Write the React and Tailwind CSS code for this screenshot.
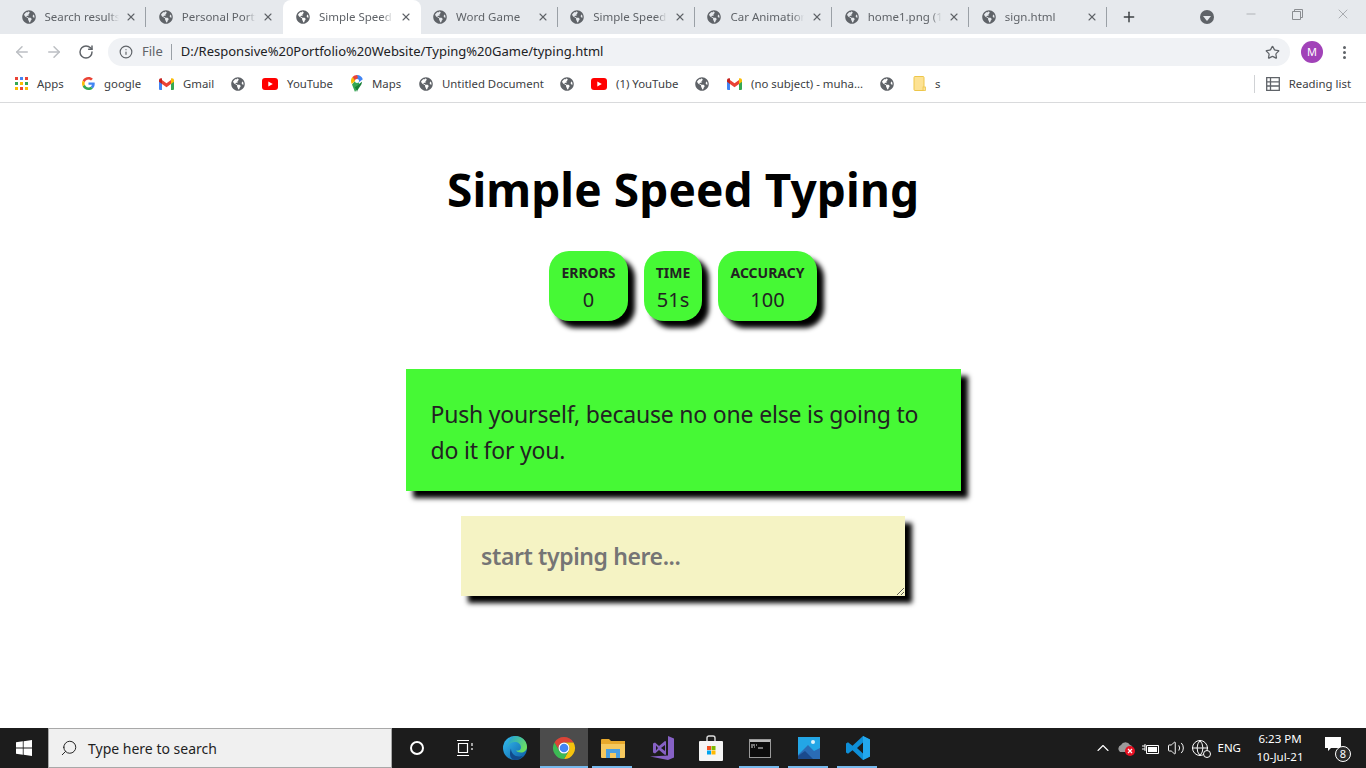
import React from "react";
import { FaGlobeAmericas } from "react-icons/fa";
import { ArrowLeft, ArrowRight, RotateCw, Info, Star, X, Plus, ChevronUp, Search, Volume2, Globe, Minus } from "lucide-react";

const tabs = [
  { title: "Search results" },
  { title: "Personal Portfolio" },
  { title: "Simple Speed Typing", active: true },
  { title: "Word Game" },
  { title: "Simple Speed Typing" },
  { title: "Car Animation" },
  { title: "home1.png (1366" },
  { title: "sign.html" },
];

function Globe16({ size = 14 }) {
  return <FaGlobeAmericas size={size} className="text-[#5f6368] shrink-0" />;
}

function GoogleIcon() {
  return (
    <svg width="13" height="13" viewBox="0 0 48 48" className="shrink-0">
      <path fill="#EA4335" d="M24 9.5c3.5 0 6.700 1.200 9.200 3.600l6.900-6.900C35.900 2.400 30.500 0 24 0 14.600 0 6.500 5.400 2.600 13.200l8 6.200C12.500 13.700 17.800 9.500 24 9.500z" />
      <path fill="#4285F4" d="M46.900 24.500c0-1.600-.1-3.100-.4-4.500H24v9h12.900c-.6 3-2.200 5.500-4.700 7.200l7.700 6c4.500-4.200 7-10.300 7-17.700z" />
      <path fill="#FBBC05" d="M10.500 28.600c-.5-1.400-.8-3-.8-4.600s.3-3.200.8-4.600l-8-6.200C.9 16.500 0 20.100 0 24s.9 7.500 2.600 10.800l7.900-6.200z" />
      <path fill="#34A853" d="M24 48c6.500 0 11.900-2.100 15.900-5.800l-7.700-6c-2.200 1.500-4.900 2.300-8.200 2.300-6.200 0-11.500-4.200-13.400-9.900l-8 6.200C6.500 42.600 14.600 48 24 48z" />
    </svg>
  );
}

function GmailIcon() {
  return (
    <svg width="15" height="12" viewBox="0 0 15 12" className="shrink-0">
      <path fill="#4285F4" d="M0 2h3v10H1a1 1 0 0 1-1-1z" />
      <path fill="#34A853" d="M12 2h3v9a1 1 0 0 1-1 1h-2z" />
      <path fill="#EA4335" d="M3 2v4l4.500 3.300L12 6V2L7.500 5.300z" />
      <path fill="#C5221F" d="M0 2.200C0 .6 1.800-.4 3 .6V6L0 3.800z" />
      <path fill="#FBBC05" d="M15 2.200c0-1.600-1.800-2.600-3-1.600V6l3-2.200z" />
    </svg>
  );
}

function YoutubeIcon() {
  return (
    <svg width="16" height="12" viewBox="0 0 16 12" className="shrink-0">
      <rect width="16" height="12" rx="3" fill="#FF0000" />
      <path d="M6.300 3.400v5.200L10.800 6z" fill="#fff" />
    </svg>
  );
}

function MapsIcon() {
  return (
    <svg width="12" height="17" viewBox="0 0 12 17" className="shrink-0">
      <path fill="#34A853" d="M1 9.500 6.500 3l2 7L4 17z" />
      <path fill="#FBBC05" d="M.8 9C.2 8 0 7 0 6c0-1.500.5-2.800 1.500-3.900L5 5z" />
      <path fill="#4285F4" d="M6 0c2.800 0 5 1.700 5.800 4.200L7 8 4.500 3z" />
      <path fill="#EA4335" d="M1.500 2.100C2.600.8 4.200 0 6 0l1 2.800L4 5.500z" />
      <circle cx="6" cy="6" r="2.100" fill="#fff" />
      <path fill="#188038" d="M6 17c-.4-2-1.200-3.400-2.200-4.800L7 10.200c1-1 2-2.200 4-3.500C11 10.500 7 13 6 17z" />
    </svg>
  );
}

function AppsIcon() {
  const colours = ["#EA4335", "#4285F4", "#EA4335", "#34A853", "#FBBC05", "#34A853", "#FBBC05", "#EA4335", "#FBBC05"];
  return (
    <div className="grid grid-cols-3 gap-[2px] w-[13px] h-[13px] shrink-0">
      {colours.map((c, i) => (
        <span key={i} className="w-[3px] h-[3px]" style={{ background: c }} />
      ))}
    </div>
  );
}

function FolderIcon() {
  return (
    <svg width="13" height="15" viewBox="0 0 13 15" className="shrink-0">
      <path d="M1 1.500a1 1 0 0 1 1-1h8a1 1 0 0 1 1 1V14.500H2a1 1 0 0 1-1-1z" fill="#FDE293" stroke="#EDC64A" />
      <rect x="10" y="11" width="2.500" height="3.500" fill="#FDE293" stroke="#EDC64A" strokeWidth="0.800" />
    </svg>
  );
}

function Bookmark({ icon, label, w, className = "" }) {
  return (
    <div className={`flex items-center shrink-0 ${className}`}>
      {icon}
      {label && (
        <span className="ml-[9px] whitespace-nowrap text-[11.400px] text-[#3c4043]" style={{ width: w }}>
          {label}
        </span>
      )}
    </div>
  );
}

function ChromeIcon() {
  return (
    <svg width="24" height="24" viewBox="0 0 24 24">
      <path fill="#DB4437" d="M2.470 6.500A11 11 0 0 1 21.530 6.500H12A5.500 5.500 0 0 0 7.240 14.750z" />
      <path fill="#F4C20D" d="M21.530 6.500A11 11 0 0 1 12 23L16.760 14.750A5.500 5.500 0 0 0 12 6.500z" />
      <path fill="#3CBA54" d="M12 23A11 11 0 0 1 2.470 6.500L7.240 14.750A5.500 5.500 0 0 0 16.760 14.750z" />
      <circle cx="12" cy="12" r="5.500" fill="#fff" />
      <circle cx="12" cy="12" r="4.300" fill="#4285F4" />
    </svg>
  );
}

function TaskCell({ children, active, underline }) {
  return (
    <div className={`relative h-full flex items-center justify-center shrink-0 ${active ? "w-[48px] ml-px bg-[#4c4c4c]" : "w-[49px]"}`}>
      {children}
      {underline && <span className={`absolute bottom-0 h-[2px] bg-[#76b9ed] ${active ? "left-0 right-0" : "left-[4px] right-[5px]"}`} />}
    </div>
  );
}

export default function App() {
  return (
    <div className="w-[1366px] h-[768px] flex flex-col overflow-hidden bg-white font-['Noto_Sans',sans-serif]">
      {/* TAB STRIP */}
      <div className="h-[34px] bg-[#e6e9ed] flex pl-[9px] shrink-0">
        {tabs.map((t, i) => (
          <div
            key={i}
            className={`relative w-[137.200px] h-full flex items-center pl-[12.500px] pr-[9px] shrink-0 ${t.active ? "bg-white rounded-t-[8px]" : ""}`}
          >
            <Globe16 />
            <span className="ml-[9px] w-[74px] overflow-hidden whitespace-nowrap text-[11.500px] text-[#5f6368] [mask-image:linear-gradient(to_right,black_85%,transparent)]">
              {t.title}
            </span>
            <X size={12} strokeWidth={2.200} className="ml-auto text-[#5f6368]" />
            {!t.active && i !== 1 && <span className="absolute right-0 top-[7px] h-[20px] w-px bg-[#9aa0a6]" />}
          </div>
        ))}
        <Plus size={16} strokeWidth={2.200} className="ml-[14px] mt-[9px] text-[#3c4043]" />
        <div className="ml-[63px] mt-[10px] w-[14px] h-[14px] rounded-full bg-[#5f6368] flex items-center justify-center shrink-0">
          <span className="mt-[2px] border-x-[4px] border-x-transparent border-t-[5px] border-t-[#e6e9ed]" />
        </div>
        <Minus size={14} strokeWidth={1} className="ml-[30px] mt-[7px] text-[#8a8d91]" />
        <svg width="11" height="11" viewBox="0 0 11 11" className="ml-[34px] mt-[9px] text-[#8a8d91]" fill="none" stroke="currentColor">
          <path d="M.5 2.500h8v8h-8zM2.500 2.500v-2h8v8h-2" />
        </svg>
        <X size={16} strokeWidth={1} className="ml-[32px] mt-[6px] text-[#8a8d91]" />
      </div>

      {/* TOOLBAR */}
      <div className="h-[32px] pt-[4px] flex items-start bg-white shrink-0">
        <ArrowLeft size={18} strokeWidth={2} className="ml-[13px] mt-[5px] text-[#bcbfc3]" />
        <ArrowRight size={18} strokeWidth={2} className="ml-[14px] mt-[5px] text-[#bcbfc3]" />
        <RotateCw size={16} strokeWidth={2.200} className="ml-[15px] mt-[6px] text-[#5f6368]" />
        <div className="ml-[14px] w-[1182px] h-[28px] bg-[#f0f2f5] rounded-full flex items-center pl-[11px] pr-[10px]">
          <Info size={14} strokeWidth={2} className="text-[#5f6368]" />
          <span className="ml-[9px] text-[13px] text-[#5f6368]">File</span>
          <span className="ml-[8px] w-px h-[16px] bg-[#9aa0a6]" />
          <span className="ml-[9px] text-[13px] text-[#202124] whitespace-nowrap">D:/Responsive%20Portfolio%20Website/Typing%20Game/typing.html</span>
          <Star size={15} strokeWidth={2} className="ml-auto text-[#5f6368]" />
        </div>
        <div className="ml-[11px] mt-[3px] w-[22px] h-[22px] rounded-full bg-[#a142b8] flex items-center justify-center text-white text-[11px]">M</div>
        <div className="ml-[20px] mt-[8px] flex flex-col gap-[2px]">
          <span className="w-[3px] h-[3px] rounded-full bg-[#5f6368]" />
          <span className="w-[3px] h-[3px] rounded-full bg-[#5f6368]" />
          <span className="w-[3px] h-[3px] rounded-full bg-[#5f6368]" />
        </div>
      </div>

      {/* BOOKMARKS */}
      <div className="h-[37px] border-b border-[#d9dadc] flex items-center pl-[15px] bg-white shrink-0">
        <Bookmark icon={<AppsIcon />} label="Apps" w={27} />
        <Bookmark icon={<GoogleIcon />} label="google" w={38} className="ml-[18px]" />
        <Bookmark icon={<GmailIcon />} label="Gmail" w={31} className="ml-[17px]" />
        <Bookmark icon={<Globe16 />} className="ml-[17px]" />
        <Bookmark icon={<YoutubeIcon />} label="YouTube" w={46} className="ml-[17px]" />
        <Bookmark icon={<MapsIcon />} label="Maps" w={30} className="ml-[18px]" />
        <Bookmark icon={<Globe16 />} label="Untitled Document" w={101} className="ml-[17px]" />
        <Bookmark icon={<Globe16 />} className="ml-[17px]" />
        <Bookmark icon={<YoutubeIcon />} label="(1) YouTube" w={63} className="ml-[17px]" />
        <Bookmark icon={<Globe16 />} className="ml-[16px]" />
        <Bookmark icon={<GmailIcon />} label="(no subject) - muha..." w={112} className="ml-[18px]" />
        <Bookmark icon={<Globe16 />} className="ml-[17px]" />
        <Bookmark icon={<FolderIcon />} label="s" w={6} className="ml-[19px]" />
        <span className="ml-auto w-px h-[18px] bg-[#d0d2d5]" />
        <svg width="14" height="14" viewBox="0 0 14 14" className="ml-[11px] text-[#5f6368]" fill="none" stroke="currentColor" strokeWidth="1.300">
          <path d="M.7.7h12.600v12.600H.7zM.7 4.800h12.600M.7 9h12.600M4.500.7v12.600" />
        </svg>
        <span className="ml-[9px] mr-[15px] text-[11.400px] text-[#3c4043] whitespace-nowrap">Reading list</span>
      </div>

      {/* GAME */}
      <main className="flex-1 flex flex-col items-center bg-white">
        <h1 className="mt-[53px] h-[66px] leading-[66px] text-[46px] tracking-[0.100px] font-bold text-black">Simple Speed Typing</h1>
        <div className="mt-[29px] flex gap-[16px]">
          <div className="h-[70px] w-[79px] rounded-[20px] bg-[#46f935] shadow-[7px_7px_5px_#000] flex flex-col items-center pt-[11px]">
            <span className="text-[14px] leading-[22px] font-bold text-[#222]">ERRORS</span>
            <span className="text-[20px] leading-[32px] text-[#222]">0</span>
          </div>
          <div className="h-[70px] w-[58px] rounded-[20px] bg-[#46f935] shadow-[7px_7px_5px_#000] flex flex-col items-center pt-[11px]">
            <span className="text-[14px] leading-[22px] font-bold text-[#222]">TIME</span>
            <span className="text-[20px] leading-[32px] text-[#222]">51s</span>
          </div>
          <div className="h-[70px] w-[99px] rounded-[20px] bg-[#46f935] shadow-[7px_7px_5px_#000] flex flex-col items-center pt-[11px]">
            <span className="text-[14px] leading-[22px] font-bold text-[#222]">ACCURACY</span>
            <span className="text-[20px] leading-[32px] text-[#222]">100</span>
          </div>
        </div>
        <div className="mt-[48px] w-[555px] h-[122px] bg-[#46f935] shadow-[7px_7px_5px_#000] px-[25px] py-[27px] text-[23px] tracking-[-0.200px] leading-[36px] text-[#222]">
          Push yourself, because no one else is going to do it for you.
        </div>
        <textarea
          placeholder="start typing here..."
          className="mt-[25px] w-[444px] h-[80px] bg-[#f5f3c4] shadow-[7px_7px_5px_#000] px-[20px] py-[20px] text-[23px] tracking-[-0.400px] leading-[40px] font-semibold text-[#222] outline-none resize-y placeholder:text-[#757575] font-['Noto_Sans',sans-serif]"
        />
      </main>

      {/* TASKBAR */}
      <div className="h-[40px] bg-[#1c1c1c] flex items-stretch shrink-0 text-white">
        <div className="w-[48px] flex items-center justify-center">
          <svg width="16" height="16" viewBox="0 0 16 16" fill="#fff">
            <path d="M0 2.300 6.800 1.300V7.500H0zM7.600 1.200 16 0V7.500H7.600zM0 8.400H6.800V14.700L0 13.700zM7.600 8.400H16V16L7.600 14.800z" />
          </svg>
        </div>
        <div className="w-[344px] bg-[#f0f0f0] border border-[#a8a8a8] flex items-center pl-[11px]">
          <Search size={18} strokeWidth={1.300} className="text-[#222] -scale-x-100" />
          <span className="ml-[10px] text-[14px] text-[#1f1f1f]">Type here to search</span>
        </div>
        <TaskCell>
          <span className="w-[14px] h-[14px] rounded-full border-2 border-white" />
        </TaskCell>
        <TaskCell>
          <svg width="17" height="16" viewBox="0 0 17 16" fill="none" stroke="#fff">
            <path d="M0 .5h12M1.500 3.500h9v9h-9zM0 15.500h12M15 3v3M15 8v2" strokeWidth="1.200" />
          </svg>
        </TaskCell>
        <TaskCell>
          <svg width="24" height="24" viewBox="0 0 24 24">
            <defs>
              <linearGradient id="edgeA" x1="0" y1="0" x2="1" y2="1">
                <stop offset="0" stopColor="#35c1f1" />
                <stop offset="1" stopColor="#0c59a4" />
              </linearGradient>
              <linearGradient id="edgeB" x1="0" y1="0" x2="1" y2="0.600">
                <stop offset="0" stopColor="#1b9de2" />
                <stop offset="1" stopColor="#6ce05f" />
              </linearGradient>
            </defs>
            <circle cx="12" cy="12" r="12" fill="url(#edgeA)" />
            <path d="M12 0c6.500 0 12 4.500 12 11 0 3.500-3 5.500-6 5.500-2.500 0-4.500-.7-5-2 2 .3 5-.2 5-3 0-3.500-3-5.500-6-5.500-4 0-6.500 2.500-7.500 5C5.500 5 8 0 12 0z" fill="url(#edgeB)" />
            <path d="M8 12.500c0 4.500 3.500 8 8 8 1.500 0 3-.4 4-1-2 3-5 4.500-8 4.500-2 0-5-2-5-6 0-2.500.3-4 1-5.500z" fill="#114a8b" />
          </svg>
        </TaskCell>
        <TaskCell active underline>
          <ChromeIcon />
        </TaskCell>
        <TaskCell underline>
          <svg width="24" height="20" viewBox="0 0 24 20">
            <path d="M0 2a1 1 0 0 1 1-1h7l2 2h-10z" fill="#e8a92c" />
            <rect y="3" width="24" height="17" rx="1" fill="#f6c95e" />
            <rect y="3" width="24" height="3" fill="#e8a92c" />
            <path d="M5 11h14v9h-4v-5H9v5H5z" fill="#4a9fe0" />
          </svg>
        </TaskCell>
        <TaskCell>
          <svg width="24" height="24" viewBox="0 0 24 24" fill="#8661c5">
            <path d="M18 0l6 2.500v19L18 24 0 20.500 18 19.500z" />
            <path d="M5 6.500 9 10l6-5 1 .5v13l-1 .5-6-5-4 3.500-2-1V7.500zM6 9.500v5l2-2.500zM11 12l4 3V9z" />
          </svg>
        </TaskCell>
        <TaskCell>
          <svg width="24" height="26" viewBox="0 0 24 26">
            <path d="M8 6V3a2 2 0 0 1 2-2h4a2 2 0 0 1 2 2v3" fill="none" stroke="#ddd" strokeWidth="1.400" />
            <rect y="6" width="24" height="20" rx="1" fill="#f5f5f5" />
            <rect x="8" y="11" width="4" height="4" fill="#f25022" />
            <rect x="12.500" y="11" width="4" height="4" fill="#7fba00" />
            <rect x="8" y="15.500" width="4" height="4" fill="#00a4ef" />
            <rect x="12.500" y="15.500" width="4" height="4" fill="#ffb900" />
          </svg>
        </TaskCell>
        <TaskCell underline>
          <svg width="22" height="19" viewBox="0 0 22 19">
            <rect x="0.500" y="0.500" width="21" height="18" fill="#0c0c0c" stroke="#9a9a9a" />
            <rect x="1" y="1" width="20" height="2" fill="#bbb" />
            <path d="M2 6h4M7 6h1M2 8h2M5 8h1M9 9h5" stroke="#ddd" fill="none" />
          </svg>
        </TaskCell>
        <TaskCell underline>
          <svg width="22" height="22" viewBox="0 0 22 22">
            <rect width="22" height="22" fill="#23a6e6" />
            <circle cx="15" cy="5" r="2" fill="#dff3fb" />
            <path d="M0 18 10 8l6 6 6-3v11H0z" fill="#2a6cb5" />
            <path d="M0 22v-3l7-5 8 8z" fill="#1a4a8c" />
          </svg>
        </TaskCell>
        <TaskCell underline>
          <svg width="24" height="24" viewBox="0 0 24 24">
            <path d="M17 0l7 3.400v17.200L17 24 6.500 14.200 2 17.700 0 16.500v-9l2-1.200 4.500 3.500zM17 6.500 11 12l6 5.500z" fill="#0e8fd8" />
            <path d="M17 0l7 3.400v17.200L17 24z" fill="#23a8ee" />
          </svg>
        </TaskCell>

        <div className="ml-auto flex items-center">
          <ChevronUp size={20} strokeWidth={1.300} className="text-white mr-[5px]" />
          <svg width="18" height="16" viewBox="0 0 18 16" className="mr-[6px]">
            <path d="M2 12a4 4 0 0 1 1-7 5 5 0 0 1 9 0 3 3 0 0 1 2 4v3z" fill="#9a9a9a" />
            <circle cx="12" cy="11" r="5" fill="#e81123" />
            <path d="M10 9l4 4M14 9l-4 4" stroke="#fff" strokeWidth="1.200" />
          </svg>
          <svg width="17" height="13" viewBox="0 0 17 13" className="mr-[8px]" fill="none" stroke="#fff">
            <path d="M4.500 3.500h12v8h-12z" />
            <rect x="6" y="5" width="9" height="5" fill="#fff" stroke="none" />
            <path d="M0 4h3M0 7h3M3 2v7" />
          </svg>
          <Volume2 size={18} strokeWidth={1.300} className="text-white mr-[6px]" />
          <div className="relative mr-[8px]">
            <Globe size={18} strokeWidth={1.300} className="text-white" />
            <span className="absolute right-[-2px] bottom-[-1px] w-[8px] h-[8px] rounded-full bg-[#1c1c1c] border border-white" />
          </div>
          <span className="text-[11.500px] mr-[15px]">ENG</span>
          <div className="flex flex-col items-center text-[11.500px] leading-[18px] w-[48px]">
            <span className="whitespace-nowrap">6:23 PM</span>
            <span className="whitespace-nowrap">10-Jul-21</span>
          </div>
          <div className="relative ml-[21px] mr-[17px] w-[24px] h-[24px]">
            <svg width="16" height="15" viewBox="0 0 16 15" className="absolute left-0 top-[1px]" fill="#fff">
              <path d="M0 0h16v11H6l-3 3v-3H0z" />
            </svg>
            <span className="absolute right-[-2px] bottom-[-2px] w-[16px] h-[16px] rounded-full bg-[#2b2b2b] border border-white text-[11px] leading-[14px] text-center">8</span>
          </div>
        </div>
      </div>
    </div>
  );
}
